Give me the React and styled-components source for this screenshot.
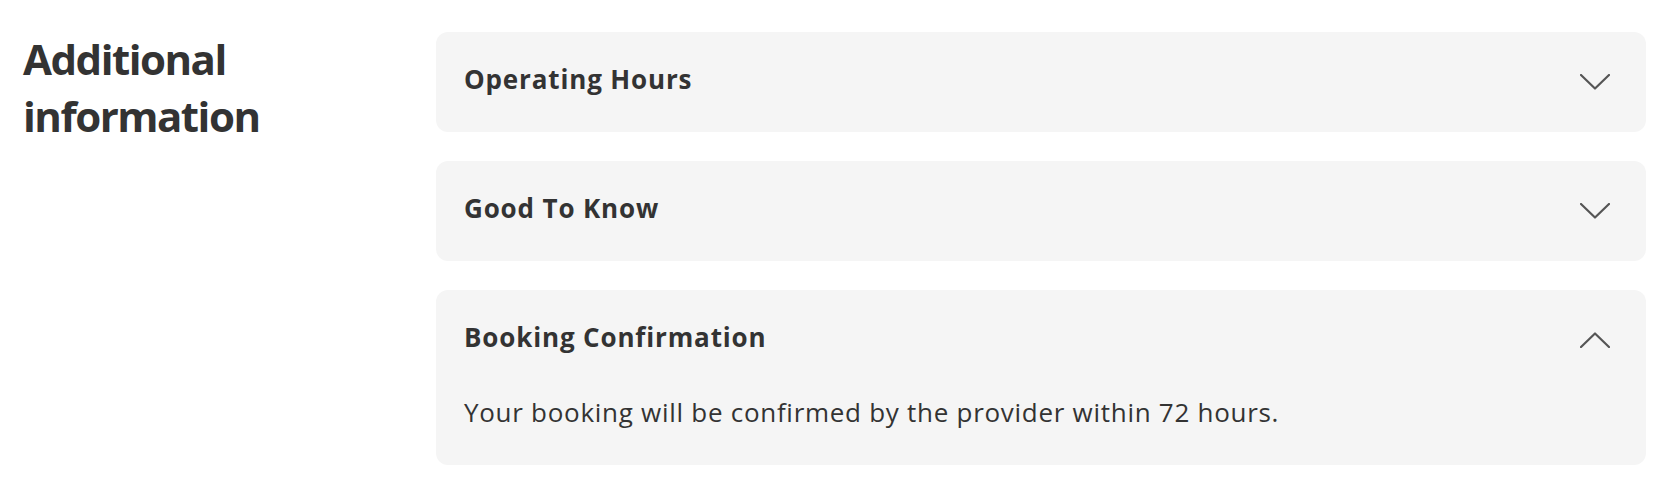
import React, { useState } from 'react';
import styled, { createGlobalStyle } from 'styled-components';

const GlobalStyle = createGlobalStyle`
  body {
    margin: 0;
    background: #ffffff;
    font-family: "Open Sans", Lato, sans-serif;
    color: #333333;
  }
`;

const Section = styled.section`
  display: grid;
  grid-template-columns: 396px 1fr;
  column-gap: 20px;
  padding: 32px 20px 22px;
`;

const Heading = styled.h2`
  margin: -2px 0 0 3px;
  font-size: 42px;
  line-height: 57px;
  font-weight: 700;
  letter-spacing: -1.5px;
  color: #333333;
`;

const List = styled.div`
  display: flex;
  flex-direction: column;
  gap: 29px;
`;

const Card = styled.div`
  background: #f5f5f5;
  border-radius: 12px;
  padding: 28px 36px 28px 28px;
`;

const Header = styled.button`
  display: flex;
  align-items: center;
  justify-content: space-between;
  width: 100%;
  height: 44px;
  padding: 0;
  border: none;
  background: none;
  cursor: pointer;
  font-family: inherit;
  color: #333333;
  text-align: left;
`;

const Title = styled.span`
  margin-bottom: 6px;
  font-size: 26px;
  font-weight: 700;
  letter-spacing: 0.85px;
`;

const Body = styled.p`
  margin: 30px 0 5px;
  font-size: 26px;
  line-height: 40px;
  letter-spacing: 0.72px;
  color: #333333;
`;

const Chevron = ({ open }) => (
  <svg width="30" height="16" viewBox="0 0 30 16" fill="none">
    <polyline
      points={open ? '1,15 15,1.5 29,15' : '1,1 15,14.5 29,1'}
      stroke="#555555"
      strokeWidth="2.2"
      strokeLinecap="round"
      strokeLinejoin="round"
    />
  </svg>
);

const items = [
  { title: 'Operating Hours', text: '' },
  { title: 'Good To Know', text: '' },
  {
    title: 'Booking Confirmation',
    text: 'Your booking will be confirmed by the provider within 72 hours.',
  },
];

export default function App() {
  const [open, setOpen] = useState(2);

  return (
    <>
      <GlobalStyle />
      <Section>
        <Heading>
          Additional
          <br />
          information
        </Heading>
        <List>
          {items.map((item, i) => (
            <Card key={item.title}>
              <Header onClick={() => setOpen(open === i ? -1 : i)}>
                <Title>{item.title}</Title>
                <Chevron open={open === i} />
              </Header>
              {open === i && <Body>{item.text}</Body>}
            </Card>
          ))}
        </List>
      </Section>
    </>
  );
}
